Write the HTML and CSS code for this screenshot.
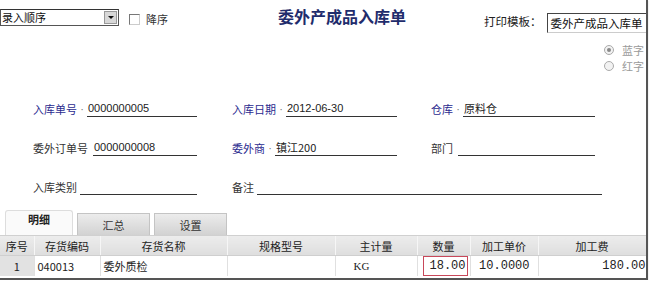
FILE: index.html
```html
<!DOCTYPE html>
<html lang="zh-CN">
<head>
    <meta charset="UTF-8">
    <title>委外产成品入库单</title>
    <link rel="stylesheet" href="styles.css">
</head>
<body>

<div class="sheet">
    <div class="topbar">
        <div class="sort-select">
            <span class="sort-text">录入顺序</span>
            <span class="drop-btn"></span>
        </div>
        <div class="desc"><span class="check"></span>降序</div>
        <h1 class="title">委外产成品入库单</h1>
        <div class="print-label">打印模板：</div>
        <div class="print-box">委外产成品入库单</div>
    </div>

    <div class="color-opts">
        <div class="radio-row"><span class="radio on"></span>蓝字</div>
        <div class="radio-row"><span class="radio"></span>红字</div>
    </div>

    <div class="head-form">
        <div class="field f1">
            <span class="lbl req">入库单号</span><span class="dot">·</span>
            <span class="val">0000000005</span>
        </div>
        <div class="field f2">
            <span class="lbl req">入库日期</span><span class="dot">·</span>
            <span class="val">2012-06-30</span>
        </div>
        <div class="field f3">
            <span class="lbl req">仓库</span><span class="dot">·</span>
            <span class="val cn">原料仓</span>
        </div>

        <div class="field f1">
            <span class="lbl">委外订单号</span><span class="gap"></span>
            <span class="val">0000000008</span>
        </div>
        <div class="field f2">
            <span class="lbl req">委外商</span><span class="dot">·</span>
            <span class="val cn">镇江200</span>
        </div>
        <div class="field f3">
            <span class="lbl">部门</span><span class="gap"></span>
            <span class="val"></span>
        </div>

        <div class="field f1">
            <span class="lbl">入库类别</span><span class="gap small"></span>
            <span class="val"></span>
        </div>
        <div class="field wide">
            <span class="lbl">备注</span><span class="gap small"></span>
            <span class="val"></span>
        </div>
    </div>

    <div class="tab-strip">
        <div class="tab active">明细</div>
        <div class="tab">汇总</div>
        <div class="tab">设置</div>
    </div>

    <table class="grid">
        <colgroup>
            <col style="width:34px">
            <col style="width:66px">
            <col style="width:127px">
            <col style="width:108px">
            <col style="width:82px">
            <col style="width:53px">
            <col style="width:68px">
            <col style="width:108px">
        </colgroup>
        <thead>
            <tr>
                <th>序号</th>
                <th>存货编码</th>
                <th>存货名称</th>
                <th>规格型号</th>
                <th>主计量</th>
                <th>数量</th>
                <th>加工单价</th>
                <th>加工费</th>
            </tr>
        </thead>
        <tbody>
            <tr>
                <td class="rowno">1</td>
                <td>040013</td>
                <td>委外质检</td>
                <td></td>
                <td class="unit">KG</td>
                <td class="num qty"><div class="qty-box">18.00</div></td>
                <td class="num price">10.0000</td>
                <td class="num fee">180.00</td>
            </tr>
        </tbody>
    </table>
</div>

</body>
</html>
```

FILE: styles.css
```css
body {
    margin: 0;
    background-color: #fff;
    font-family: "Liberation Sans", "Noto Sans CJK SC", sans-serif;
    font-size: 11px;
    color: #222;
}
.sheet {
    width: 646px;
    height: 278px;
    border-right: 2px solid #555;
    border-bottom: 2px solid #555;
    overflow: hidden;
    box-shadow: 0 1px 1px #bbb;
}

/* top bar */
.topbar {
    display: flex;
    align-items: flex-start;
    height: 36px;
    white-space: nowrap;
}
.topbar > * {
    flex-shrink: 0;
}
.sort-select {
    display: flex;
    width: 117px;
    height: 15px;
    margin-top: 9px;
    border: 1px solid #555;
    border-top-color: #333;
    background-color: #fff;
}
.sort-text {
    flex: 1;
    line-height: 15px;
    padding-left: 1px;
    font-family: "Noto Sans CJK SC", sans-serif;
    font-size: 11px;
    color: #111;
}
.drop-btn {
    width: 13px;
    height: 13px;
    margin: 1px;
    background-color: #d8d8d8;
    border: 1px solid #999;
    box-sizing: border-box;
    position: relative;
}
.drop-btn::after {
    content: "";
    position: absolute;
    left: 3px;
    top: 4px;
    border-left: 3px solid transparent;
    border-right: 3px solid transparent;
    border-top: 3px solid #111;
}
.desc {
    display: flex;
    align-items: center;
    margin-top: 11px;
    margin-left: 10px;
    font-family: "Noto Sans CJK SC", sans-serif;
    font-size: 11px;
    color: #333;
}
.check {
    width: 9px;
    height: 9px;
    border: 1px solid #777;
    border-right-color: #ccc;
    border-bottom-color: #ccc;
    margin-right: 6px;
}
.title {
    margin: 6px 0 0 110px;
    font-family: "Noto Sans CJK SC", sans-serif;
    font-size: 16px;
    line-height: 20px;
    font-weight: bold;
    color: #1f2c6c;
}
.print-label {
    margin: 14px 0 0 78px;
    font-family: "Noto Sans CJK SC", sans-serif;
    font-size: 11.5px;
    line-height: 14px;
    color: #222;
}
.print-box {
    width: 110px;
    height: 18px;
    margin: 13px 0 0 5px;
    border: 1px solid #ccc;
    border-top-color: #444;
    border-left-color: #444;
    padding-left: 3px;
    font-family: "Noto Sans CJK SC", sans-serif;
    font-size: 11.5px;
    line-height: 18px;
    color: #111;
}

/* blue / red */
.color-opts {
    margin: 6px 0 0 604px;
}
.radio-row {
    display: flex;
    align-items: center;
    height: 16px;
    font-family: "Noto Sans CJK SC", sans-serif;
    font-size: 11px;
    color: #9a9a9a;
}
.radio {
    width: 8px;
    height: 8px;
    border: 1px solid #aaa;
    border-radius: 50%;
    margin-right: 8px;
    background-color: #f2f2f2;
    position: relative;
}
.radio.on::after {
    content: "";
    position: absolute;
    left: 2px;
    top: 2px;
    width: 4px;
    height: 4px;
    border-radius: 50%;
    background-color: #888;
}

/* header form */
.head-form {
    display: grid;
    grid-template-columns: 199px 199px 215px;
    row-gap: 22px;
    margin-top: 26px;
    padding-left: 33px;
}
.field {
    display: flex;
    align-items: flex-end;
    height: 17px;
}
.f1 { width: 164px; }
.f2 { width: 165px; }
.f3 { width: 164px; }
.wide { grid-column: 2 / 4; width: 370px; }
.lbl {
    font-family: "Noto Sans CJK SC", sans-serif;
    font-size: 11px;
    line-height: 16px;
    color: #333;
    white-space: nowrap;
}
.lbl.req {
    color: #2b2b8f;
}
.dot {
    width: 10px;
    text-align: center;
    line-height: 16px;
    color: #777;
}
.gap { width: 5px; }
.gap.small { width: 3px; }
.val {
    flex: 1;
    height: 16px;
    line-height: 16px;
    border-bottom: 1px solid #333;
    padding-left: 1px;
    font-size: 11px;
    color: #222;
    white-space: nowrap;
}
.val.cn {
    font-family: "Noto Sans CJK SC", sans-serif;
}

/* tabs */
.tab-strip {
    display: flex;
    align-items: flex-end;
    height: 26px;
    margin-top: 15px;
    padding-left: 5px;
    border-bottom: 1px solid #d0d0d0;
    box-sizing: border-box;
}
.tab {
    width: 73px;
    height: 22px;
    margin-left: 4px;
    border: 1px solid #c4c4c4;
    border-bottom: none;
    background: linear-gradient(#ececec, #d2d2d2);
    text-align: center;
    font-family: "Noto Sans CJK SC", sans-serif;
    font-size: 11px;
    line-height: 22px;
    color: #333;
    box-sizing: border-box;
}
.tab.active {
    width: 68px;
    height: 25px;
    margin-left: 0;
    border-color: #ddd;
    border-radius: 3px 3px 0 0;
    background: #fafafa;
    font-weight: bold;
    line-height: 16px;
    color: #222;
}

/* detail grid */
.grid {
    width: 646px;
    table-layout: fixed;
    border-collapse: collapse;
    font-size: 11px;
}
.grid th {
    height: 19px;
    padding: 0;
    background: linear-gradient(#ececec, #dedede);
    border-right: 1px solid #f6f6f6;
    border-bottom: 1px solid #cfcfcf;
    font-family: "Noto Sans CJK SC", sans-serif;
    font-weight: normal;
    color: #222;
    text-align: center;
}
.grid td {
    height: 20px;
    padding: 0 3px;
    border-right: 1px solid #e0e0e0;
    font-family: "Noto Sans CJK SC", "Liberation Sans", sans-serif;
    color: #222;
    white-space: nowrap;
}
.grid td.rowno {
    background-color: #e2e2e2;
    text-align: center;
    padding: 0;
}
.grid td.unit {
    padding-left: 18px;
    font-family: "Liberation Serif", serif;
}
.grid td.num {
    font-family: "Liberation Mono", monospace;
    font-size: 12px;
    text-align: right;
}
.grid td.qty {
    padding: 0 2px 0 5px;
}
.qty-box {
    height: 18px;
    line-height: 18px;
    border: 1px solid #c8485a;
    padding-right: 1px;
}
.grid td.price {
    padding-right: 8px;
}
.grid td.fee {
    padding-right: 0;
}
```
